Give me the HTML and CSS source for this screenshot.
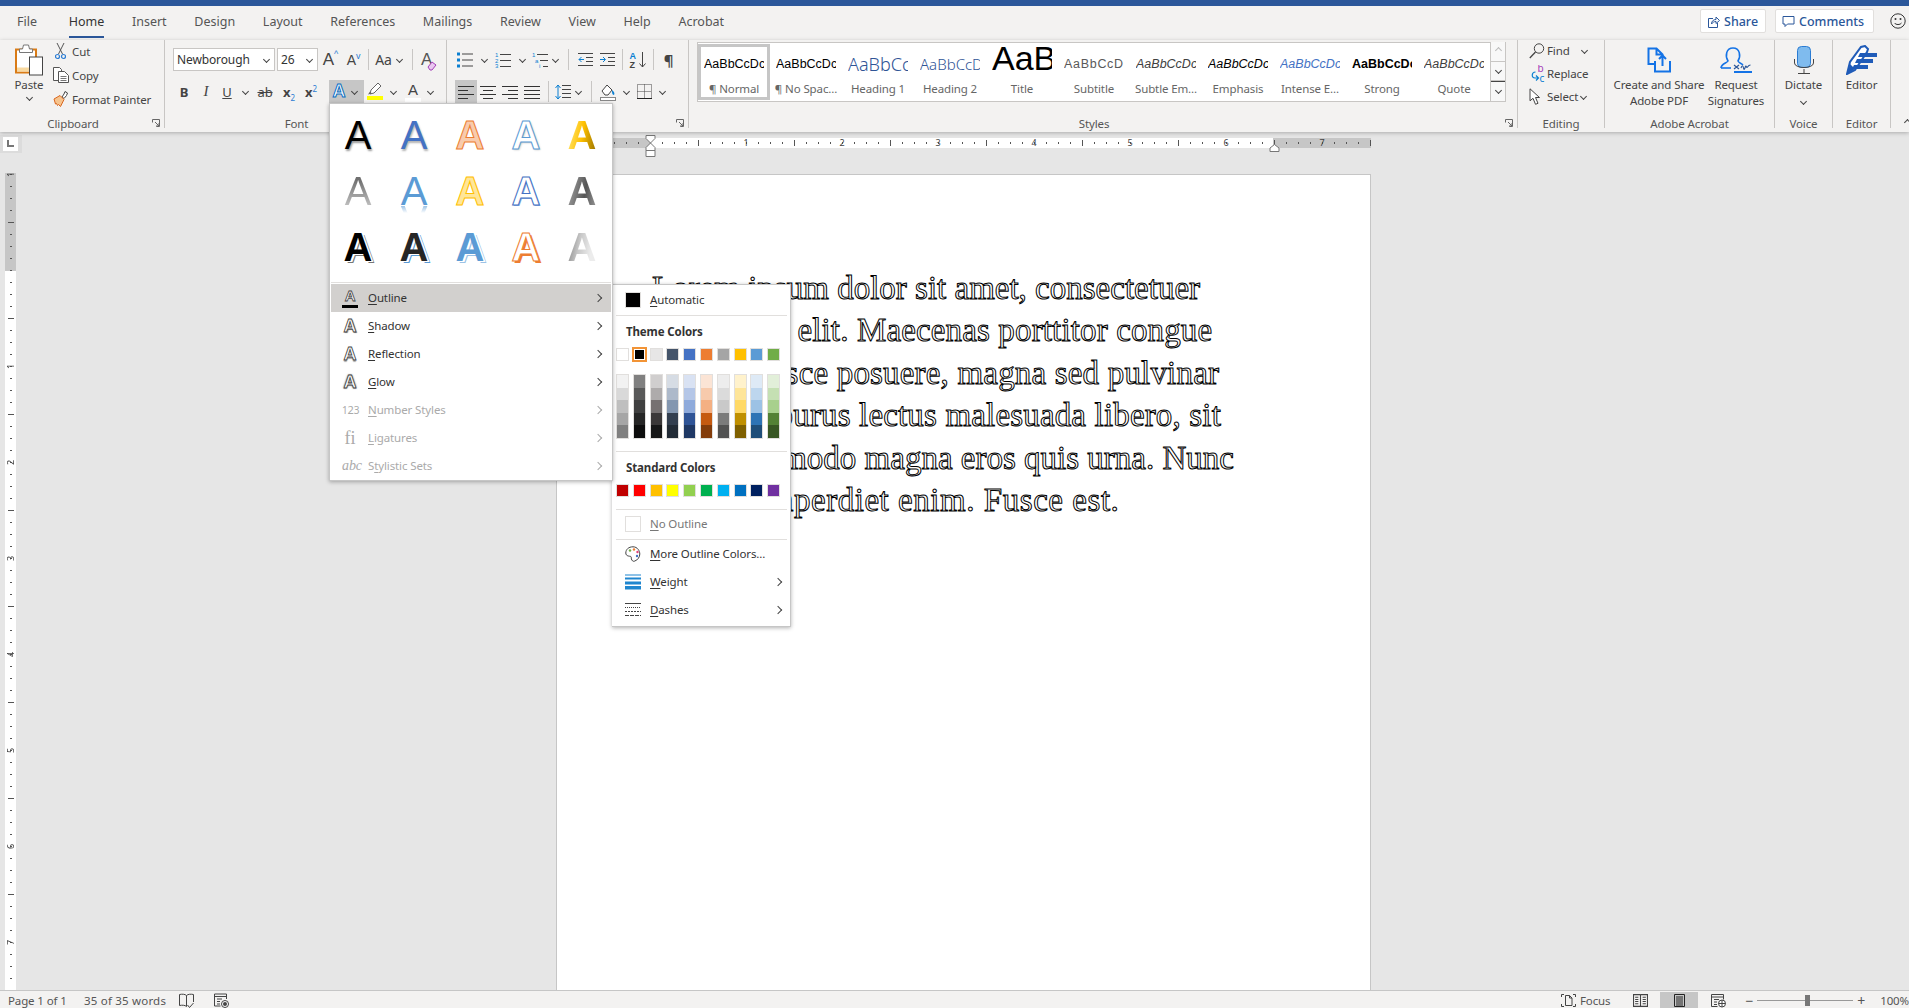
FILE: index.html
```html
<!DOCTYPE html>
<html lang="en">
<head>
    <meta charset="UTF-8">
    <title>Document - Word</title>
    <link rel="stylesheet" href="styles.css">
</head>
<body>
<svg class="icon-defs" width="0" height="0">
    <defs>
        <symbol id="i-paste" viewBox="0 0 28 32">
            <rect x="1" y="6" width="20" height="23" fill="#fff" stroke="#d97b16" stroke-width="2"/>
            <path d="M2 24h18v4H2z" fill="#f8d9a0"/>
            <path d="M4.5 9V5.5h3l1-4h5l1 4h3V9z" fill="#fff" stroke="#777"/>
            <rect x="14.5" y="13.5" width="13" height="18" fill="#fff" stroke="#444"/>
        </symbol>
        <symbol id="i-cut" viewBox="0 0 11 17">
            <path d="M2 0l5.5 11M9 0L3.5 11" stroke="#555" fill="none"/>
            <circle cx="2.5" cy="13.5" r="2" fill="none" stroke="#2b7cd3" stroke-width="1.2"/>
            <circle cx="8.5" cy="13.5" r="2" fill="none" stroke="#2b7cd3" stroke-width="1.2"/>
        </symbol>
        <symbol id="i-copy" viewBox="0 0 16 16">
            <path d="M5.5 13.5h-5v-13h6l2 2v2" fill="#fff" stroke="#555"/>
            <path d="M5.5 4.5h6l4 4v7h-10z" fill="#fff" stroke="#555"/>
            <path d="M7.5 9.5h6M7.5 11.5h6M7.5 13.5h6" stroke="#777"/>
        </symbol>
        <symbol id="i-painter" viewBox="0 0 16 16">
            <path d="M9 6l2-3 1-2.500 2.500 1.500-1 2.500-2.500 3z" fill="#fff" stroke="#444"/>
            <path d="M1 8l6-3.500 4 4-3.500 7-2-2-1 1-1-2-1 .5z" fill="#f6c48e" stroke="#d9661e"/>
        </symbol>
        <symbol id="i-launcher" viewBox="0 0 8 8">
            <path d="M.5 3.500v-3h7v7h-3M3 3l4 4M7 4v3H4" fill="none" stroke="#666"/>
        </symbol>
        <symbol id="i-eraser" viewBox="0 0 10 10">
            <path d="M1 6l4-5 4 3-4 5H3z" fill="#e9c8f0" stroke="#a33cb8"/>
        </symbol>
        <symbol id="i-pen" viewBox="0 0 16 12">
            <path d="M3 11l1-4 7-7 3 3-7 7z" fill="#fff" stroke="#666"/>
            <path d="M1 11.500l2-3 2 2z" fill="#666"/>
        </symbol>
        <symbol id="i-bullets" viewBox="0 0 16 15">
            <path d="M0 0h3v3H0zM0 6h3v3H0zM0 12h3v3H0z" fill="#0a7fd1"/>
            <path d="M5 1.500h11M5 7.500h11M5 13.500h11" stroke="#444"/>
        </symbol>
        <symbol id="i-numbers" viewBox="0 0 16 16">
            <text x="0" y="5" class="icon-digit">1</text>
            <text x="0" y="10.500" class="icon-digit">2</text>
            <text x="0" y="16" class="icon-digit">3</text>
            <path d="M5 2.500h11M5 8.500h11M5 14.500h11" stroke="#444"/>
        </symbol>
        <symbol id="i-multi" viewBox="0 0 16 16">
            <text x="0" y="5" class="icon-digit">1</text>
            <text x="3" y="10.500" class="icon-digit">a</text>
            <text x="7" y="16" class="icon-digit">i</text>
            <path d="M5 2.500h11M8 8.500h8M11 14.500h5" stroke="#444"/>
        </symbol>
        <symbol id="i-outdent" viewBox="0 0 15 13">
            <path d="M0 .5h15M8 4.500h7M8 8.500h7M0 12.500h15" stroke="#444"/>
            <path d="M6 6.500H1M3.500 4l-2.500 2.500L3.500 9" stroke="#0a7fd1" fill="none"/>
        </symbol>
        <symbol id="i-indent" viewBox="0 0 15 13">
            <path d="M0 .5h15M8 4.500h7M8 8.500h7M0 12.500h15" stroke="#444"/>
            <path d="M0 6.500h5M3 4l2.500 2.500L3 9" stroke="#0a7fd1" fill="none"/>
        </symbol>
        <symbol id="i-sort" viewBox="0 0 17 18">
            <text x="0" y="8" class="icon-az icon-az-a">A</text>
            <text x="0" y="17" class="icon-az">Z</text>
            <path d="M13 1v15M10 12.500l3 3.500 3-3.500" stroke="#444" fill="none"/>
        </symbol>
        <symbol id="i-align-left" viewBox="0 0 16 13">
            <path d="M0 .5h16M0 4.500h10M0 8.500h16M0 12.500h10" stroke="#333"/>
        </symbol>
        <symbol id="i-align-center" viewBox="0 0 16 13">
            <path d="M0 .5h16M3 4.500h10M0 8.500h16M3 12.500h10" stroke="#333"/>
        </symbol>
        <symbol id="i-align-right" viewBox="0 0 16 13">
            <path d="M0 .5h16M6 4.500h10M0 8.500h16M6 12.500h10" stroke="#333"/>
        </symbol>
        <symbol id="i-justify" viewBox="0 0 16 13">
            <path d="M0 .5h16M0 4.500h16M0 8.500h16M0 12.500h16" stroke="#333"/>
        </symbol>
        <symbol id="i-spacing" viewBox="0 0 16 16">
            <path d="M3 1v14M.5 4L3 1l2.500 3M.5 12L3 15l2.500-3" stroke="#0a7fd1" fill="none"/>
            <path d="M7 1.500h9M7 5.500h9M7 9.500h9M7 13.500h9" stroke="#444"/>
        </symbol>
        <symbol id="i-shading" viewBox="0 0 16 18">
            <path d="M2 8l5-6 5 5-4 5H5z" fill="#fff" stroke="#444"/>
            <path d="M12 7c2 2 3 3 2 5-2 0-2-3-2-5z" fill="#0a7fd1"/>
            <rect x=".5" y="14.500" width="15" height="3" fill="#fff" stroke="#888"/>
        </symbol>
        <symbol id="i-borders" viewBox="0 0 15 15">
            <path d="M.5.5h14v14H.5zM7.500.5v14M.5 7.500h14" fill="none" stroke="#444" stroke-dasharray="1 1"/>
            <path d="M0 14.500h15" stroke="#222"/>
        </symbol>
        <symbol id="i-share" viewBox="0 0 13 13">
            <path d="M6 3.500H1.500v9h9V8" fill="none" stroke="#2b579a"/>
            <path d="M4.500 9c0-3 2-4.500 4.500-4.500V2l3.500 3.500L9 8.500V6.500C7 6.500 5.500 7.500 4.500 9z" fill="#fff" stroke="#2b579a"/>
        </symbol>
        <symbol id="i-comment" viewBox="0 0 13 13">
            <path d="M1 1.500h11v7.500H5.500L3 11.500V9H1z" fill="#fff" stroke="#2b579a"/>
        </symbol>
        <symbol id="i-smiley" viewBox="0 0 16 16">
            <circle cx="8" cy="8" r="7.200" fill="none" stroke="#333"/>
            <circle cx="5.500" cy="6" r="1" fill="#333"/>
            <circle cx="10.500" cy="6" r="1" fill="#333"/>
            <path d="M4.500 10c1.500 2 5.500 2 7 0" fill="none" stroke="#333"/>
        </symbol>
        <symbol id="i-find" viewBox="0 0 16 16">
            <circle cx="10" cy="5.500" r="4.700" fill="none" stroke="#444"/>
            <path d="M6.500 9L.8 15" stroke="#444" stroke-width="1.300"/>
        </symbol>
        <symbol id="i-replace" viewBox="0 0 15 18">
            <text x="7" y="7" class="icon-rep icon-rep-b">b</text>
            <text x="9" y="17" class="icon-rep icon-rep-c">c</text>
            <path d="M5 7C1 7 .5 13 4.500 13H8M5.500 10.500L8 13l-2.500 2.500" fill="none" stroke="#0a7fd1" stroke-width="1.200"/>
        </symbol>
        <symbol id="i-select" viewBox="0 0 12 17">
            <path d="M1 .8v12l3-2.500 2.500 6 2.500-1-2.500-5.800h4z" fill="#fff" stroke="#444"/>
        </symbol>
        <symbol id="i-create" viewBox="0 0 24 26">
            <path d="M8 17H1.500V1.500h8l6 6V10M9.500 1.500v6h6" fill="none" stroke="#1473e6" stroke-width="2"/>
            <path d="M8 14v10.500h15V14" fill="none" stroke="#1473e6" stroke-width="2"/>
            <path d="M15.500 19V9M12 12l3.500-3.500L19 12" fill="none" stroke="#1473e6" stroke-width="2"/>
        </symbol>
        <symbol id="i-request" viewBox="0 0 32 27">
            <path d="M1 21c0-4 6-5 7-7C5 9 6 1 13 1s8 8 5 13c1 2 3 2 5 4" fill="none" stroke="#1473e6" stroke-width="1.600"/>
            <path d="M1 21h10" stroke="#1473e6" stroke-width="1.600"/>
            <path d="M14 18l5 4M19 18l-5 4M21 21c1-3 2-3 2.500 0s1.500 0 2-1.500 1 2 2 .5 1.500-2 3-2" fill="none" stroke="#2b579a" stroke-width="1.200"/>
            <path d="M14 25h18" stroke="#1473e6" stroke-width="2"/>
        </symbol>
        <symbol id="i-mic" viewBox="0 0 20 28">
            <rect x="3.500" y=".5" width="13" height="21" rx="4" fill="#7fbbee" stroke="#2b7cd3"/>
            <path d="M.5 13v4c0 6 19 6 19 0v-4M10 23v4M4 27.500h12" fill="none" stroke="#444"/>
        </symbol>
        <symbol id="i-editor" viewBox="0 0 32 30">
            <path d="M1 29L4 17 15 2l4-1 3 3-1 3L9 25z" fill="#fff" stroke="#1f5bb8" stroke-width="2"/>
            <path d="M1 29l3-10 5 5z" fill="#1f5bb8"/>
            <path d="M14 8h17v4H12zM11 14h16v4H9zM8 20h14v4H6z" fill="#1f5bb8"/>
        </symbol>
        <symbol id="i-palette" viewBox="0 0 16 16">
            <path d="M8 .8C3.500.8.800 3.500.800 7s4 3 5 3.500 0 2 1 3.500 2 1.500 3 1c3-1 5-4 5-7S12.500.8 8 .8z" fill="#fff" stroke="#444"/>
            <circle cx="5" cy="4.500" r="1.200" fill="#70ad47"/>
            <circle cx="9" cy="3.500" r="1.200" fill="#ed7d31"/>
            <circle cx="12.500" cy="6" r="1.200" fill="#e0457b"/>
            <circle cx="12" cy="10" r="1.200" fill="#4472c4"/>
        </symbol>
        <symbol id="i-weight" viewBox="0 0 16 15">
            <path d="M0 0h16v1H0zM0 3h16v2H0zM0 7h16v3H0zM0 11.500h16V15H0z" fill="#1f86cf"/>
        </symbol>
        <symbol id="i-dashes" viewBox="0 0 16 14">
            <path d="M0 .5h16" stroke="#444"/>
            <path d="M0 4.500h16" stroke="#444" stroke-dasharray="1 1"/>
            <path d="M0 8.500h16" stroke="#444" stroke-dasharray="2 1"/>
            <path d="M0 12.500h16" stroke="#444" stroke-dasharray="4 1"/>
        </symbol>
        <symbol id="i-proof" viewBox="0 0 15 15">
            <path d="M7.500 2.500C6 1 3 1 .5 1.500v11c2.500-.5 5.500-.5 7 1zM7.500 2.500C9 1 12 1 14.500 1.500V9" fill="none" stroke="#444"/>
            <path d="M8.500 12l2 2.500L14.500 10" fill="none" stroke="#444"/>
        </symbol>
        <symbol id="i-macro" viewBox="0 0 15 15">
            <path d="M.5 1h12v5M.5 1v12h6M.5 3.500h12M3 6h5M3 8.500h3M3 11h3" fill="none" stroke="#444"/>
            <circle cx="11" cy="11" r="3.500" fill="#fff" stroke="#444"/>
            <circle cx="11" cy="11" r="2" fill="#444"/>
        </symbol>
        <symbol id="i-focus" viewBox="0 0 15 13">
            <path d="M.5 3V.5H3M12 .5h2.500V3M.5 10v2.500H3M12 12.500h2.500V10" fill="none" stroke="#444"/>
            <path d="M4.500 1.500h4l2.500 2.500v7.500H4.500zM8.500 1.500V4H11" fill="none" stroke="#444"/>
        </symbol>
        <symbol id="i-read" viewBox="0 0 14 12">
            <path d="M.5.5h6l.5.5.5-.5h6v11h-6l-.5-.5-.5.5h-6zM7 1v10M2 3h3M2 5h3M2 7h3M2 9h3M9 3h3M9 5h3M9 7h3M9 9h3" fill="none" stroke="#444"/>
        </symbol>
        <symbol id="i-print" viewBox="0 0 11 13">
            <path d="M.5.5h10v12H.5zM2 3h7M2 5h7M2 7h7M2 9h7M2 11h7" fill="none" stroke="#222"/>
        </symbol>
        <symbol id="i-web" viewBox="0 0 15 14">
            <path d="M.5 1h12v5M.5 1v12h6M.5 3.500h12M3 6h5M3 8.500h3M3 11h3" fill="none" stroke="#444"/>
            <circle cx="11" cy="10" r="3.500" fill="#fff" stroke="#444"/>
            <path d="M7.500 10h7M11 6.500v7" stroke="#444"/>
        </symbol>
    </defs>
</svg>

<div class="app">
    <div class="title-strip"></div>

    <div class="tab-row">
        <nav class="tabs">
            <span class="tab">File</span>
            <span class="tab tab-active">Home</span>
            <span class="tab">Insert</span>
            <span class="tab">Design</span>
            <span class="tab">Layout</span>
            <span class="tab">References</span>
            <span class="tab">Mailings</span>
            <span class="tab">Review</span>
            <span class="tab">View</span>
            <span class="tab">Help</span>
            <span class="tab">Acrobat</span>
        </nav>
        <div class="tab-actions">
            <button class="action-btn share-btn"><svg class="ico13"><use href="#i-share"/></svg>Share</button>
            <button class="action-btn comments-btn"><svg class="ico13"><use href="#i-comment"/></svg>Comments</button>
            <svg class="smiley"><use href="#i-smiley"/></svg>
        </div>
    </div>

    <div class="ribbon">
        <section class="group group-clipboard">
            <div class="group-body clipboard-body">
                <div class="paste-col">
                    <svg class="paste-icon"><use href="#i-paste"/></svg>
                    <span>Paste</span>
                    <i class="caret"></i>
                </div>
                <div class="clip-actions">
                    <div class="clip-row"><span class="clip-slot"><svg class="cut-icon"><use href="#i-cut"/></svg></span>Cut</div>
                    <div class="clip-row"><span class="clip-slot"><svg class="ico16"><use href="#i-copy"/></svg></span>Copy</div>
                    <div class="clip-row"><span class="clip-slot"><svg class="ico16"><use href="#i-painter"/></svg></span>Format Painter</div>
                </div>
            </div>
            <div class="group-label"><span>Clipboard</span><svg class="launcher"><use href="#i-launcher"/></svg></div>
        </section>

        <section class="group group-font">
            <div class="group-body">
                <div class="tool-grid font-row-top">
                    <div class="combo combo-name">Newborough<i class="caret"></i></div>
                    <div class="combo combo-size">26<i class="caret"></i></div>
                    <span class="font-size-btn">A<sup class="size-mark">^</sup></span>
                    <span class="font-size-btn font-shrink">A<sup class="size-mark">v</sup></span>
                    <i class="v-sep"></i>
                    <span class="case-btn">Aa</span>
                    <i class="caret"></i>
                    <i class="v-sep"></i>
                    <span class="clear-btn">A<svg class="eraser"><use href="#i-eraser"/></svg></span>
                </div>
                <div class="tool-grid font-row-bottom">
                    <span class="fmt fmt-bold">B</span>
                    <span class="fmt fmt-italic">I</span>
                    <span class="fmt fmt-under">U</span>
                    <i class="caret"></i>
                    <span class="fmt fmt-strike">ab</span>
                    <span class="fmt fmt-bold-x">x<sub class="fmt-script">2</sub></span>
                    <span class="fmt fmt-bold-x">x<sup class="fmt-script">2</sup></span>
                    <span></span>
                    <span class="effects-btn"><span class="effects-a">A</span><i class="caret"></i></span>
                    <span class="highlight-btn"><svg class="pen-icon"><use href="#i-pen"/></svg><i class="color-bar bar-yellow"></i></span>
                    <i class="caret"></i>
                    <span class="fontcolor-btn">A<i class="color-bar bar-white"></i></span>
                    <i class="caret"></i>
                </div>
            </div>
            <div class="group-label"><span>Font</span><svg class="launcher"><use href="#i-launcher"/></svg></div>
        </section>

        <section class="group group-paragraph">
            <div class="group-body">
                <div class="tool-grid para-row-top">
                    <svg class="ico16"><use href="#i-bullets"/></svg>
                    <i class="caret"></i>
                    <svg class="ico16"><use href="#i-numbers"/></svg>
                    <i class="caret"></i>
                    <svg class="ico16"><use href="#i-multi"/></svg>
                    <i class="caret"></i>
                    <i class="v-sep"></i>
                    <svg class="ico15"><use href="#i-outdent"/></svg>
                    <svg class="ico15"><use href="#i-indent"/></svg>
                    <i class="v-sep"></i>
                    <svg class="ico18"><use href="#i-sort"/></svg>
                    <i class="v-sep"></i>
                    <span class="pilcrow">¶</span>
                </div>
                <div class="tool-grid para-row-bottom">
                    <span class="align-btn align-active"><svg class="ico16"><use href="#i-align-left"/></svg></span>
                    <span class="align-btn"><svg class="ico16"><use href="#i-align-center"/></svg></span>
                    <span class="align-btn"><svg class="ico16"><use href="#i-align-right"/></svg></span>
                    <span class="align-btn"><svg class="ico16"><use href="#i-justify"/></svg></span>
                    <i class="v-sep"></i>
                    <svg class="ico16"><use href="#i-spacing"/></svg>
                    <i class="caret"></i>
                    <i class="v-sep"></i>
                    <svg class="ico18"><use href="#i-shading"/></svg>
                    <i class="caret"></i>
                    <svg class="ico15"><use href="#i-borders"/></svg>
                    <i class="caret"></i>
                </div>
            </div>
            <div class="group-label"><span>Paragraph</span><svg class="launcher"><use href="#i-launcher"/></svg></div>
        </section>

        <section class="group group-styles">
            <div class="group-body">
                <div class="gallery">
                    <div class="style-item style-selected"><div class="sample">AaBbCcDc</div><div class="style-name">¶ Normal</div></div>
                    <div class="style-item"><div class="sample">AaBbCcDc</div><div class="style-name">¶ No Spac...</div></div>
                    <div class="style-item"><div class="sample sample-h1">AaBbCc</div><div class="style-name">Heading 1</div></div>
                    <div class="style-item"><div class="sample sample-h2">AaBbCcD</div><div class="style-name">Heading 2</div></div>
                    <div class="style-item"><div class="sample sample-title">AaB</div><div class="style-name">Title</div></div>
                    <div class="style-item"><div class="sample sample-subtitle">AaBbCcD</div><div class="style-name">Subtitle</div></div>
                    <div class="style-item"><div class="sample sample-subtle">AaBbCcDc</div><div class="style-name">Subtle Em...</div></div>
                    <div class="style-item"><div class="sample sample-emph">AaBbCcDc</div><div class="style-name">Emphasis</div></div>
                    <div class="style-item"><div class="sample sample-intense">AaBbCcDc</div><div class="style-name">Intense E...</div></div>
                    <div class="style-item"><div class="sample sample-strong">AaBbCcDc</div><div class="style-name">Strong</div></div>
                    <div class="style-item"><div class="sample sample-subtle">AaBbCcDc</div><div class="style-name">Quote</div></div>
                    <div class="gallery-scroll">
                        <span class="scroll-btn"><i class="caret caret-up caret-muted"></i></span>
                        <span class="scroll-btn"><i class="caret"></i></span>
                        <span class="scroll-btn scroll-more"><i class="caret"></i></span>
                    </div>
                </div>
            </div>
            <div class="group-label"><span>Styles</span><svg class="launcher"><use href="#i-launcher"/></svg></div>
        </section>

        <section class="group group-editing">
            <div class="group-body editing-body">
                <div class="edit-row"><span class="edit-slot"><svg class="ico16"><use href="#i-find"/></svg></span>Find<i class="caret find-caret"></i></div>
                <div class="edit-row"><span class="edit-slot"><svg class="ico18"><use href="#i-replace"/></svg></span>Replace</div>
                <div class="edit-row"><span class="edit-slot"><svg class="select-icon"><use href="#i-select"/></svg></span>Select<i class="caret select-caret"></i></div>
            </div>
            <div class="group-label group-label-plain">Editing</div>
        </section>

        <section class="group group-acrobat">
            <div class="group-body acrobat-body">
                <div class="big-btn create-btn"><span class="big-icon"><svg class="create-icon"><use href="#i-create"/></svg></span><span>Create and Share<br>Adobe PDF</span></div>
                <div class="big-btn request-btn"><span class="big-icon"><svg class="request-icon"><use href="#i-request"/></svg></span><span>Request<br>Signatures</span></div>
            </div>
            <div class="group-label group-label-plain">Adobe Acrobat</div>
        </section>

        <section class="group group-voice">
            <div class="group-body">
                <div class="big-btn"><span class="big-icon"><svg class="mic-icon"><use href="#i-mic"/></svg></span><span>Dictate</span><i class="caret big-caret"></i></div>
            </div>
            <div class="group-label group-label-plain">Voice</div>
        </section>

        <section class="group group-editor">
            <div class="group-body">
                <div class="big-btn"><span class="big-icon"><svg class="editor-icon"><use href="#i-editor"/></svg></span><span>Editor</span></div>
            </div>
            <div class="group-label group-label-plain">Editor</div>
        </section>

        <i class="caret caret-up collapse-caret"></i>
    </div>

    <div class="workspace">
        <div class="left-pane">
            <div class="tab-selector"><span class="tab-selector-inner"><i class="tab-l"></i></span></div>
            <div class="v-ruler">
                <span class="v-num">1</span>
                <span class="v-num"></span>
                <span class="v-num">1</span>
                <span class="v-num">2</span>
                <span class="v-num">3</span>
                <span class="v-num">4</span>
                <span class="v-num">5</span>
                <span class="v-num">6</span>
                <span class="v-num">7</span>
            </div>
        </div>
        <div class="doc-pane">
            <div class="h-ruler">
                <span class="h-num">1</span>
                <span class="h-num">2</span>
                <span class="h-num">3</span>
                <span class="h-num">4</span>
                <span class="h-num">5</span>
                <span class="h-num">6</span>
                <span class="h-num">7</span>
                <svg class="indent-marker" viewBox="0 0 11 22"><path d="M1 .5h9v3L5.500 8 1 3.500zM5.500 8L10 12.500v3H1v-3zM1 15.500h9v6H1z" fill="#fff" stroke="#777"/></svg>
                <svg class="right-marker" viewBox="0 0 11 8"><path d="M5.500.5L10 4v3.500H1V4z" fill="#fff" stroke="#777"/></svg>
            </div>
            <div class="page">
                <p class="doc-text">
                    <span class="doc-line">Lorem ipsum dolor sit amet, consectetuer</span>
                    <span class="doc-line line-2">adipiscing elit. Maecenas porttitor congue</span>
                    <span class="doc-line line-3">massa. Fusce posuere, magna sed pulvinar</span>
                    <span class="doc-line line-4">ultricies, purus lectus malesuada libero, sit</span>
                    <span class="doc-line">amet commodo magna eros quis urna. Nunc</span>
                    <span class="doc-line line-6">viverra imperdiet enim. Fusce est.</span>
                </p>
            </div>
        </div>
    </div>

    <footer class="status-bar">
        <span class="status-page">Page 1 of 1</span>
        <span class="status-words">35 of 35 words</span>
        <svg class="ico15 status-proof"><use href="#i-proof"/></svg>
        <svg class="ico15 status-macro"><use href="#i-macro"/></svg>
        <span class="status-right">
            <svg class="ico15"><use href="#i-focus"/></svg>
            <span class="status-focus">Focus</span>
            <svg class="ico15 status-read"><use href="#i-read"/></svg>
            <span class="view-active"><svg class="print-icon"><use href="#i-print"/></svg></span>
            <svg class="ico15 status-web"><use href="#i-web"/></svg>
            <span class="zoom-sign">−</span>
            <span class="zoom-track"><i class="zoom-thumb"></i></span>
            <span class="zoom-sign">+</span>
            <span class="zoom-pct">100%</span>
        </span>
    </footer>

    <div class="effects-menu">
        <div class="effects-gallery">
            <span class="fx fx-black">A</span>
            <span class="fx fx-blue">A</span>
            <span class="fx fx-peach">A</span>
            <span class="fx fx-sky">A</span>
            <span class="fx fx-gold">A</span>
            <span class="fx fx-gray">A</span>
            <span class="fx fx-mirror">A</span>
            <span class="fx fx-butter">A</span>
            <span class="fx fx-navy">A</span>
            <span class="fx fx-steel">A</span>
            <span class="fx fx-heavy">A</span>
            <span class="fx fx-coal">A</span>
            <span class="fx fx-azure">A</span>
            <span class="fx fx-ember">A</span>
            <span class="fx fx-silver">A</span>
        </div>
        <div class="menu-sep"></div>
        <div class="menu-row menu-row-hot"><span class="mi"><span class="mi-a mi-a-small">A</span><i class="mi-bar"></i></span><span class="label"><u>O</u>utline</span><i class="chev"></i></div>
        <div class="menu-row"><span class="mi"><span class="mi-a mi-shadow">A</span></span><span class="label"><u>S</u>hadow</span><i class="chev"></i></div>
        <div class="menu-row"><span class="mi"><span class="mi-a mi-reflect">A</span></span><span class="label"><u>R</u>eflection</span><i class="chev"></i></div>
        <div class="menu-row"><span class="mi"><span class="mi-a mi-glow">A</span></span><span class="label"><u>G</u>low</span><i class="chev"></i></div>
        <div class="menu-row menu-row-off"><span class="mi mi-nums">1<span class="mi-big">2</span>3</span><span class="label"><u>N</u>umber Styles</span><i class="chev"></i></div>
        <div class="menu-row menu-row-off"><span class="mi mi-lig">fi</span><span class="label"><u>L</u>igatures</span><i class="chev"></i></div>
        <div class="menu-row menu-row-off"><span class="mi mi-abc">abc</span><span class="label">S<u>t</u>ylistic Sets</span><i class="chev"></i></div>
    </div>

    <div class="outline-menu">
        <div class="color-row auto-row"><span class="big-swatch swatch-auto"></span><span class="label"><u>A</u>utomatic</span></div>
        <div class="menu-sep-flat"></div>
        <div class="color-heading">Theme Colors</div>
        <div class="swatch-grid" id="themeColors"></div>
        <div class="shade-grid" id="themeShades"></div>
        <div class="menu-sep-flat shade-sep"></div>
        <div class="color-heading">Standard Colors</div>
        <div class="swatch-grid" id="standardColors"></div>
        <div class="menu-sep-flat shade-sep"></div>
        <div class="color-row no-outline-row"><span class="big-swatch"></span><span class="label label-muted"><u>N</u>o Outline</span></div>
        <div class="menu-sep-flat"></div>
        <div class="color-row"><svg class="ico16"><use href="#i-palette"/></svg><span class="label"><u>M</u>ore Outline Colors...</span></div>
        <div class="color-row"><svg class="ico16"><use href="#i-weight"/></svg><span class="label"><u>W</u>eight</span><i class="chev"></i></div>
        <div class="color-row"><svg class="ico16"><use href="#i-dashes"/></svg><span class="label"><u>D</u>ashes</span><i class="chev"></i></div>
    </div>
</div>
<script src="script.js"></script>
</body>
</html>
```

FILE: styles.css
```css
/* Reset */
* {
    box-sizing: border-box;
}

body {
    margin: 0;
    font-family: "Noto Sans", "Open Sans", sans-serif;
    font-size: 11.5px;
    letter-spacing: -0.12px;
    color: #444;
    background: #e6e6e6;
    overflow: hidden;
}

i {
    font-style: normal;
}

svg {
    display: block;
    overflow: visible;
}

.icon-defs {
    position: absolute;
}

.icon-digit {
    font-size: 6px;
    fill: #0a7fd1;
    font-family: "Liberation Sans", sans-serif;
}

.icon-az {
    font: bold 9px "Liberation Sans", sans-serif;
    fill: #444;
}

.icon-az-a {
    fill: #0a7fd1;
}

.icon-rep {
    font: 10px "Noto Sans", sans-serif;
}

.icon-rep-b {
    fill: #a33cb8;
}

.icon-rep-c {
    fill: #0a7fd1;
}

.ico13 { width: 13px; height: 13px; }
.ico15 { width: 15px; height: 15px; }
.ico16 { width: 16px; height: 16px; }
.ico18 { width: 18px; height: 18px; }

.app {
    position: relative;
    width: 1909px;
    height: 1008px;
    display: flex;
    flex-direction: column;
    overflow: hidden;
}

.title-strip {
    height: 6px;
    background: #2b579a;
    flex: none;
}

/* Tabs */
.tab-row {
    height: 34px;
    flex: none;
    display: flex;
    align-items: flex-start;
    background: #f3f2f1;
    padding-left: 17px;
}

.tabs {
    display: flex;
    gap: 27.7px;
    font-size: 12.5px;
    letter-spacing: 0;
    line-height: 26px;
    padding-top: 3px;
}

.tab {
    height: 29px;
    color: #555;
}

.tab-active {
    color: #333;
    margin-left: 4px;
    border-bottom: 2px solid #2b579a;
}

.tab-actions {
    margin-left: auto;
    display: flex;
    align-items: center;
    padding: 3px 3px 0 0;
}

.action-btn {
    height: 24px;
    display: flex;
    align-items: center;
    gap: 4px;
    padding: 0 0 0 6px;
    background: #fff;
    border: 1px solid #e1dfdd;
    border-radius: 2px;
    font: 500 12.5px "Noto Sans", sans-serif;
    color: #2b579a;
}

.share-btn {
    width: 66px;
}

.comments-btn {
    width: 99px;
    margin-left: 9px;
}

.smiley {
    width: 16px;
    height: 16px;
    margin-left: 16px;
}

/* Ribbon */
.ribbon {
    height: 92px;
    flex: none;
    display: flex;
    background: #f3f2f1;
    box-shadow: 0 1px 4px rgba(0, 0, 0, 0.25);
    position: relative;
    z-index: 1;
}

.group {
    height: 88px;
    border-right: 1px solid #c8c6c4;
    display: flex;
    flex-direction: column;
    flex: none;
}

.group-body {
    height: 78px;
    flex: none;
}

.group-label {
    height: 12px;
    line-height: 12px;
    display: flex;
    font-size: 11.5px;
    color: #555;
    text-align: center;
}

.group-label span {
    flex: 1;
}

.launcher {
    width: 8px;
    height: 8px;
    margin: 1px 4px 0 6px;
}

.group-label-plain {
    display: block;
}

.group-clipboard { width: 165px; }
.group-font { width: 282px; }
.group-paragraph { width: 242px; }
.group-styles { width: 829px; }
.group-editing { width: 87px; }
.group-acrobat { width: 170px; }
.group-voice { width: 58px; }
.group-editor { width: 58px; }

.caret {
    display: block;
    width: 5px;
    height: 5px;
    border-right: 1px solid #444;
    border-bottom: 1px solid #444;
    transform: rotate(45deg);
    flex: none;
}

.caret-up {
    transform: rotate(225deg);
}

.caret-muted {
    border-color: #bbb;
}

.collapse-caret {
    margin: 80px 0 0 14px;
}

.v-sep {
    display: block;
    width: 1px;
    height: 21px;
    background: #c8c6c4;
}

.clipboard-body {
    display: flex;
    padding-left: 12px;
}

.paste-col {
    width: 34px;
    display: flex;
    flex-direction: column;
    align-items: center;
    padding-top: 3px;
    line-height: 18px;
}

.paste-icon {
    width: 28px;
    height: 33px;
}

.paste-col .caret {
    margin-top: 1px;
}

.clip-actions {
    margin: -1px 0 0 6px;
}

.clip-row {
    height: 24px;
    display: flex;
    align-items: center;
    white-space: nowrap;
}

.clip-slot {
    width: 20px;
    display: flex;
    justify-content: center;
    padding-right: 3px;
}

.cut-icon {
    width: 11px;
    height: 17px;
}

/* Rows of small tools: every column is sized to hold one tool */
.tool-grid {
    display: grid;
    align-items: center;
    justify-items: center;
    height: 23px;
    margin-top: 8px;
}

.font-row-top {
    grid-template-columns: 104px 41px 25px 21px 8px 23px 8px 18px 15px;
    margin-left: 8px;
}

.font-row-bottom {
    grid-template-columns: 22px 22px 20px 16px 24px 24px 20px 8px 35px 22px 14px 26px 8px;
    margin-left: 8px;
    margin-top: 9px;
}

.para-row-top {
    grid-template-columns: 28px 10px 27px 12px 23px 8px 19px 15px 28px 2px 29px 2px 29px;
    margin-left: 4px;
}

.para-row-bottom {
    grid-template-columns: 22px 22px 22px 22px 10px 20px 10px 17px 16px 20px 17px 18px;
    margin-left: 8px;
    margin-top: 9px;
}

.combo {
    height: 23px;
    background: #fff;
    border: 1px solid #c8c6c4;
    display: flex;
    align-items: center;
    justify-content: space-between;
    padding: 0 5px 0 3px;
    font-size: 12px;
    color: #333;
    justify-self: start;
}

.combo-name {
    width: 102px;
}

.combo-size {
    width: 41px;
}

.font-size-btn {
    font: 17px "Liberation Sans", sans-serif;
    color: #444;
    display: flex;
}

.font-shrink {
    font-size: 14px;
}

.size-mark {
    font-size: 9px;
    line-height: 8px;
    color: #2b7cd3;
}

.case-btn {
    font: 14px "Noto Sans", sans-serif;
}

.clear-btn {
    position: relative;
    font: 17px "Liberation Sans", sans-serif;
    color: #555;
    width: 15px;
}

.eraser {
    position: absolute;
    width: 10px;
    height: 10px;
    left: 6px;
    top: 11px;
}

.fmt {
    font: 13px "Noto Sans", sans-serif;
    color: #444;
}

.fmt-bold {
    font-weight: 700;
}

.fmt-italic {
    font-style: italic;
    font-family: "Liberation Serif", serif;
    font-size: 15px;
}

.fmt-under {
    text-decoration: underline;
}

.fmt-strike {
    text-decoration: line-through;
}

.fmt-bold-x {
    font-weight: 700;
}

.fmt-script {
    font-size: 8px;
    color: #2b7cd3;
    line-height: 0;
    font-weight: 400;
}

.effects-btn {
    width: 35px;
    height: 23px;
    background: #c6c6c6;
    display: flex;
    align-items: center;
    justify-content: space-between;
    padding: 0 7px 0 3px;
}

.effects-a {
    font: bold 18px "Liberation Sans", sans-serif;
    color: #fff;
    -webkit-text-stroke: 1px #0a6fc2;
    width: 14px;
    text-align: center;
}

.highlight-btn,
.fontcolor-btn {
    display: flex;
    flex-direction: column;
    align-items: center;
    width: 16px;
}

.pen-icon {
    width: 16px;
    height: 12px;
}

.fontcolor-btn {
    font: 15px/15px "Liberation Sans", sans-serif;
    color: #444;
}

.color-bar {
    display: block;
    width: 16px;
    height: 4px;
    margin-top: 1px;
}

.bar-yellow {
    background: #ffff00;
}

.bar-white {
    background: #fff;
}

.pilcrow {
    font-size: 15px;
    font-weight: 700;
    color: #444;
}

.align-btn {
    width: 22px;
    height: 23px;
    display: flex;
    align-items: center;
    justify-content: center;
    padding-top: 2px;
}

.align-active {
    background: #c6c6c6;
}

.align-btn svg {
    height: 13px;
}

/* Styles gallery */
.gallery {
    height: 60px;
    margin: 2px 11px 0 8px;
    background: #fff;
    border: 1px solid #c8c6c4;
    display: flex;
}

.style-item {
    width: 72px;
    flex: none;
    text-align: center;
    padding-top: 2px;
    height: 56px;
    margin-top: 1px;
}

.style-selected {
    outline: 3px solid #c6c6c6;
    outline-offset: -3px;
}

.sample {
    height: 35px;
    width: 60px;
    margin: 0 auto;
    overflow: hidden;
    white-space: nowrap;
    font: 12.5px/36px "Liberation Sans", sans-serif;
    letter-spacing: 0;
    color: #000;
    text-align: left;
}

.sample-h1 {
    font-size: 18px;
    color: #2f5496;
    font-family: "Noto Sans", sans-serif;
    font-weight: 300;
}

.sample-h2 {
    font-size: 15px;
    color: #2f5496;
    font-family: "Noto Sans", sans-serif;
    font-weight: 300;
}

.sample-title {
    font-size: 34px;
    line-height: 24px;
    font-family: "Liberation Sans", sans-serif;
    font-weight: 400;
}

.sample-subtitle {
    letter-spacing: 0.7px;
    color: #595959;
}

.sample-subtle {
    font-style: italic;
    color: #404040;
}

.sample-emph {
    font-style: italic;
}

.sample-intense {
    font-style: italic;
    color: #4472c4;
}

.sample-strong {
    font-weight: 700;
}

.style-name {
    line-height: 16px;
    color: #666;
    white-space: nowrap;
}

.gallery-scroll {
    margin-left: auto;
    width: 15px;
    flex: none;
    display: flex;
    flex-direction: column;
    border-left: 1px solid #c8c6c4;
    margin-top: -1px;
    margin-bottom: -1px;
}

.scroll-btn {
    flex: 1;
    background: #f8f8f8;
    border-bottom: 1px solid #c8c6c4;
    display: flex;
    justify-content: center;
    padding-top: 6px;
}

.scroll-more {
    border-top: 1px solid #444;
    background-clip: padding-box;
}

/* Editing */
.editing-body {
    padding: 0 0 0 11px;
    margin-top: -1px;
    height: 79px;
}

.edit-row {
    height: 23px;
    display: flex;
    align-items: center;
    white-space: nowrap;
}

.edit-slot {
    width: 18px;
    flex: none;
}

.select-icon {
    width: 12px;
    height: 17px;
}

.find-caret {
    margin-left: 12px;
}

.select-caret {
    margin-left: 3px;
}

/* Big buttons */
.big-btn {
    display: flex;
    flex-direction: column;
    align-items: center;
    text-align: center;
    line-height: 16px;
    padding-top: 3px;
}

.big-icon {
    height: 34px;
    display: flex;
    align-items: center;
}

.big-caret {
    margin-top: 6px;
}

.acrobat-body {
    display: flex;
}

.create-btn {
    width: 108px;
}

.request-btn {
    width: 46px;
    white-space: nowrap;
}

.create-icon {
    width: 24px;
    height: 26px;
}

.request-icon {
    width: 32px;
    height: 27px;
}

.mic-icon {
    width: 20px;
    height: 28px;
}

.editor-icon {
    width: 32px;
    height: 30px;
}

/* Document area */
.workspace {
    flex: 1;
    min-height: 0;
    display: flex;
    background: #e6e6e6;
}

.left-pane {
    width: 556px;
    flex: none;
    display: flex;
    flex-direction: column;
}

.tab-selector {
    width: 22px;
    height: 18px;
    margin-top: 3px;
    background: #dcdcdc;
    padding: 2px 3px;
}

.tab-selector-inner {
    display: block;
    width: 15px;
    height: 14px;
    background: #fff;
    padding: 3px 4px;
}

.tab-l {
    display: block;
    width: 7px;
    height: 7px;
    border-left: 2px solid #777;
    border-bottom: 2px solid #777;
}

.v-ruler {
    width: 11px;
    flex: 1;
    margin: 20px 0 0 5px;
    display: flex;
    flex-direction: column;
    background:
        linear-gradient(#555 1px, transparent 1px) 5px 1px / 2px 12px repeat-y,
        linear-gradient(#555 1px, transparent 1px) 3px 49px / 6px 96px repeat-y,
        linear-gradient(#c6c6c6 98px, #fff 98px);
}

.v-num {
    height: 96px;
    flex: none;
    display: flex;
    align-items: center;
    justify-content: center;
    font-size: 9px;
    color: #444;
    writing-mode: vertical-rl;
    transform: rotate(180deg);
}

.v-num:first-child {
    margin-top: -47px;
}

.doc-pane {
    width: 815px;
    flex: none;
    display: flex;
    flex-direction: column;
}

.h-ruler {
    height: 10px;
    margin-top: 6px;
    flex: none;
    position: relative;
    display: flex;
    padding-left: 142px;
    background:
        linear-gradient(to right, #555 1px, transparent 1px) 94px center / 12px 2px repeat-x,
        linear-gradient(to right, #555 1px, transparent 1px) 142px center / 96px 6px repeat-x,
        linear-gradient(to right, #c6c6c6 95px, #fff 95px, #fff 717px, #c6c6c6 717px);
}

.h-num {
    width: 96px;
    flex: none;
    text-align: center;
    font-size: 9px;
    line-height: 10px;
    color: #444;
}

.indent-marker {
    position: absolute;
    left: 89px;
    top: -3px;
    width: 11px;
    height: 22px;
}

.right-marker {
    position: absolute;
    left: 713px;
    top: 6px;
    width: 11px;
    height: 8px;
}

.page {
    flex: 1;
    margin-top: 26px;
    background: #fff;
    border: 1px solid #c6c6c6;
    border-bottom: none;
    padding: 92px 0 0 95px;
}

.doc-text {
    margin: 0;
    font-family: "Liberation Serif", serif;
    font-size: 33px;
    letter-spacing: 0;
    line-height: 42.4px;
    color: #fff;
    -webkit-text-stroke: 1px #000;
}

.doc-line {
    display: block;
    white-space: nowrap;
}

.line-2 { letter-spacing: 0.14px; }
.line-3 { letter-spacing: 0.18px; }
.line-4 { letter-spacing: 0.16px; }
.line-6 { letter-spacing: 0.54px; }

/* Status bar */
.status-bar {
    height: 18px;
    flex: none;
    display: flex;
    align-items: center;
    background: #f3f2f1;
    border-top: 1px solid #c6c6c6;
    padding: 2px 0 0 8px;
    font-size: 11.5px;
    color: #555;
    overflow: hidden;
    position: relative;
    z-index: 1;
    white-space: nowrap;
}

.status-page {
    width: 57px;
}

.status-words {
    width: 75px;
    margin-left: 19px;
    letter-spacing: 0.2px;
}

.status-proof {
    margin-left: 20px;
}

.status-macro {
    margin-left: 20px;
}

.status-right {
    margin-left: auto;
    display: flex;
    align-items: center;
    width: 348px;
}

.status-focus {
    width: 29px;
    margin-left: 4px;
}

.status-read {
    margin-left: 24px;
}

.view-active {
    width: 40px;
    height: 18px;
    margin-left: 12px;
    background: #c6c6c6;
    display: flex;
    align-items: center;
    justify-content: center;
}

.print-icon {
    width: 11px;
    height: 13px;
}

.status-web {
    margin-left: 13px;
}

.zoom-sign {
    width: 8px;
    margin-left: 19px;
    font-size: 14px;
    line-height: 14px;
    text-align: center;
}

.zoom-track {
    width: 100px;
    height: 1px;
    margin-left: 4px;
    background: #999;
    position: relative;
    display: block;
}

.zoom-track + .zoom-sign {
    margin-left: 4px;
}

.zoom-thumb {
    position: absolute;
    left: 48px;
    top: -5px;
    width: 5px;
    height: 11px;
    background: #777;
}

.zoom-pct {
    margin-left: 15px;
}

/* Text effects menu */
.effects-menu {
    position: absolute;
    left: 329px;
    top: 103px;
    width: 284px;
    height: 378px;
    background: #fff;
    border: 1px solid #c6c6c6;
    box-shadow: 0 1px 4px rgba(0, 0, 0, 0.3);
    z-index: 3;
}

.effects-gallery {
    display: grid;
    grid-template-columns: repeat(5, 56px);
    grid-auto-rows: 56px;
    padding-top: 3px;
}

.fx {
    position: relative;
    font: 40px/56px "Liberation Sans", sans-serif;
    letter-spacing: 0;
    text-align: center;
}

.fx-black { color: #000; text-shadow: 1px 2px 2px rgba(0, 0, 0, 0.4); }
.fx-blue { color: #4472c4; text-shadow: 1px 2px 2px rgba(0, 0, 0, 0.3); }
.fx-peach { color: #f8cbad; font-weight: 700; -webkit-text-stroke: 1px #ed7d31; }
.fx-sky { color: #fff; font-weight: 700; -webkit-text-stroke: 1px #5b9bd5; text-shadow: 1px 1px 2px rgba(0, 0, 0, 0.25); }
.fx-gold { color: transparent; font-weight: 700; background: linear-gradient(100deg, #ffe266 30%, #ffc000 50%, #a97f00 72%); -webkit-background-clip: text; background-clip: text; }
.fx-gray { color: transparent; background: linear-gradient(#6f6f6f 30%, #bdbdbd 75%); -webkit-background-clip: text; background-clip: text; }
.fx-mirror { color: #5b9bd5; }
.fx-mirror::after {
    content: "A";
    position: absolute;
    left: 0;
    right: 0;
    top: 0;
    color: #9cc2e5;
    transform: scaleY(-1);
    transform-origin: 50% 42.5px;
    -webkit-mask-image: linear-gradient(transparent 35px, #000 42px);
    mask-image: linear-gradient(transparent 35px, #000 42px);
}
.fx-butter { color: #ffe699; font-weight: 700; -webkit-text-stroke: 1px #ffc000; }
.fx-navy { color: #fff; font-weight: 700; -webkit-text-stroke: 1px #4472c4; text-shadow: 1px 1px 0 #8eaadb; }
.fx-steel { color: transparent; font-weight: 700; background: linear-gradient(100deg, #9a9a9a 30%, #555 55%, #8a8a8a 72%); -webkit-background-clip: text; background-clip: text; }
.fx-heavy { color: #000; font-weight: 700; text-shadow: 2px 1px 0 #fff, 3px 2px 0 #777; }
.fx-coal { color: #262626; font-weight: 700; text-shadow: 2px 1px 0 #fff, 3px 2px 0 #5b9bd5; }
.fx-azure { color: #5b9bd5; font-weight: 700; text-shadow: 2px 1px 0 #fff, 3px 2px 0 #9cc2e5; }
.fx-ember { color: #fff; font-weight: 700; -webkit-text-stroke: 1px #ed7d31; text-shadow: 2px 2px 0 #ed7d31; }
.fx-silver { color: transparent; font-weight: 700; background: linear-gradient(100deg, #808080 25%, #c8c8c8 45%, #ececec 65%); -webkit-background-clip: text; background-clip: text; }

.menu-sep {
    height: 1px;
    margin: 7px 1px 1px;
    background: #e1dfdd;
}

.menu-row {
    height: 28px;
    margin: 0 1px;
    display: flex;
    align-items: center;
    color: #333;
    line-height: 28px;
}

.menu-row-hot {
    background: #d2d0ce;
}

.menu-row-off {
    color: #aaa;
}

.mi {
    width: 16px;
    height: 20px;
    margin-left: 11px;
    position: relative;
    display: block;
    text-align: center;
    font-size: 10px;
    line-height: 20px;
}

.mi-a {
    display: block;
    font: 700 18px/20px "Liberation Sans", sans-serif;
    color: #fff;
    -webkit-text-stroke: 0.8px #444;
}

.mi-a-small {
    font-size: 15px;
    line-height: 15px;
}

.mi-bar {
    position: absolute;
    left: 0;
    bottom: 0;
    width: 16px;
    height: 3px;
    background: #000;
}

.mi-shadow { text-shadow: 1px 1px 1px #888; }
.mi-reflect { text-shadow: 0 2px 1px #aaa; }
.mi-glow { text-shadow: 0 0 2px #777, 0 0 2px #777; }

.mi-big {
    font-size: 11px;
}

.mi-lig {
    font: 18px/20px "Liberation Serif", serif;
}

.mi-abc {
    font: italic 14px/20px "Liberation Serif", serif;
}

.label {
    margin-left: 10px;
    flex: 1;
    white-space: nowrap;
}

.label u {
    text-underline-offset: 2px;
}

.chev {
    display: block;
    width: 6px;
    height: 6px;
    border-right: 1px solid #444;
    border-bottom: 1px solid #444;
    transform: rotate(-45deg);
    margin-right: 10px;
}

.menu-row-off .chev {
    border-color: #aaa;
}

/* Outline colour submenu */
.outline-menu {
    position: absolute;
    left: 612px;
    top: 284px;
    width: 179px;
    height: 343px;
    background: #fff;
    border: 1px solid #c6c6c6;
    border-left: none;
    box-shadow: 0 1px 4px rgba(0, 0, 0, 0.3);
    z-index: 2;
    padding-left: 1px;
    color: #333;
}

.color-row {
    height: 28px;
    display: flex;
    align-items: center;
    padding-left: 12px;
    line-height: 28px;
}

.color-row .label {
    margin-left: 9px;
}

.color-row .chev {
    margin-right: 9px;
}

.auto-row {
    height: 30px;
}

.no-outline-row {
    height: 29px;
}

.big-swatch {
    width: 16px;
    height: 16px;
    border: 1px solid #e1dfdd;
    flex: none;
}

.swatch-auto {
    background: #000;
}

.label-muted {
    color: #777;
}

.menu-sep-flat {
    height: 1px;
    margin: 0 3px;
    background: #e1dfdd;
}

.shade-sep {
    margin-top: 12px;
}

.color-heading {
    height: 32px;
    padding-left: 13px;
    line-height: 32px;
    font-weight: 700;
    color: #333;
}

.swatch-grid,
.shade-grid {
    display: grid;
    grid-template-columns: repeat(10, 13px);
    column-gap: 3.8px;
    padding-left: 3px;
}

.swatch {
    width: 13px;
    height: 13px;
    border: 1px solid #e1dfdd;
}

.swatch-picked {
    outline: 1px solid #f29436;
    border-color: #f29436;
    box-shadow: inset 0 0 0 1px #fff;
}

.shade-grid {
    margin-top: 13px;
}

.shade-col {
    border: 1px solid #e1dfdd;
}

.shade {
    display: block;
    height: 12.6px;
}
```

FILE: script.js
```js
// Colour tables of the outline menu
const themeColors = ['#ffffff', '#000000', '#e7e6e6', '#44546a', '#4472c4', '#ed7d31', '#a5a5a5', '#ffc000', '#5b9bd5', '#70ad47'];
const standardColors = ['#c00000', '#ff0000', '#ffc000', '#ffff00', '#92d050', '#00b050', '#00b0f0', '#0070c0', '#002060', '#7030a0'];
const themeShades = [
    ['#f2f2f2', '#d9d9d9', '#bfbfbf', '#a6a6a6', '#808080'],
    ['#808080', '#595959', '#404040', '#262626', '#0d0d0d'],
    ['#d0cece', '#aeabab', '#767171', '#3b3838', '#171717'],
    ['#d6dce4', '#adb9ca', '#8497b0', '#333f4f', '#222b35'],
    ['#d9e2f3', '#b4c6e7', '#8eaadb', '#2f5496', '#1f3864'],
    ['#fbe4d5', '#f7caac', '#f4b083', '#c55a11', '#833c0b'],
    ['#ededed', '#dbdbdb', '#c9c9c9', '#7b7b7b', '#525252'],
    ['#fff2cc', '#fee599', '#ffd966', '#bf8f00', '#7f6000'],
    ['#deeaf6', '#bdd6ee', '#9cc2e5', '#2e74b5', '#1f4e79'],
    ['#e2efd9', '#c5e0b3', '#a8d08d', '#538135', '#375623']
];

function addSwatches(id, colors) {
    const grid = document.getElementById(id);
    colors.forEach(color => {
        const swatch = document.createElement('span');
        swatch.className = 'swatch';
        swatch.style.background = color;
        grid.appendChild(swatch);
    });
}

addSwatches('themeColors', themeColors);
addSwatches('standardColors', standardColors);
document.getElementById('themeColors').children[1].classList.add('swatch-picked');

const shadeGrid = document.getElementById('themeShades');
themeShades.forEach(column => {
    const col = document.createElement('div');
    col.className = 'shade-col';
    column.forEach(color => {
        const cell = document.createElement('span');
        cell.className = 'shade';
        cell.style.background = color;
        col.appendChild(cell);
    });
    shadeGrid.appendChild(col);
});
```
